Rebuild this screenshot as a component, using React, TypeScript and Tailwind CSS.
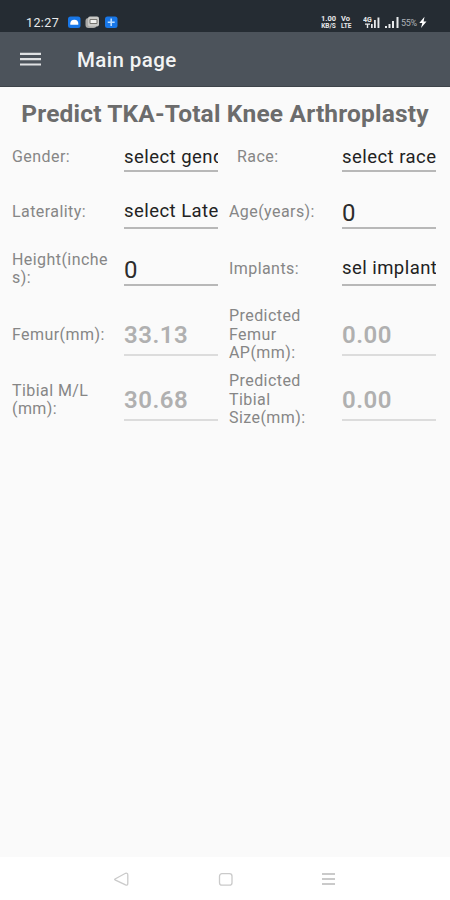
import React from "react";

type Field = {
  label: string;
  value: string;
  labelClass?: string;
  valueClass: string;
};

const selectText = "text-[18.5px] tracking-[0.45px] pt-[3px] text-[#222]";
const numberText = "text-[24px] pt-1 text-[#2c2c2c]";
const resultText = "text-[24px] font-semibold tracking-[0.5px] pt-[3px] text-[#b0b0b0]";

const rows: { height: string; field: string; items: Field[] }[] = [
  {
    height: "h-[30px]",
    field: "h-[30px] border-[#b8b8b8]",
    items: [
      { label: "Gender:", value: "select gender", valueClass: selectText },
      { label: "Race:", value: "select race", labelClass: "pl-2", valueClass: selectText },
    ],
  },
  {
    height: "h-[57px] mt-[11px]",
    field: "h-[35px] border-[#b8b8b8]",
    items: [
      { label: "Laterality:", value: "select Laterality", valueClass: selectText },
      { label: "Age(years):", value: "0", valueClass: numberText },
    ],
  },
  {
    height: "h-[57px]",
    field: "h-[35px] border-[#b8b8b8]",
    items: [
      { label: "Height(inches):", value: "0", valueClass: numberText },
      { label: "Implants:", value: "sel implant", valueClass: selectText },
    ],
  },
  {
    height: "h-[65px] mt-[5px]",
    field: "h-[42px] border-[#dcdcdc]",
    items: [
      { label: "Femur(mm):", value: "33.13", valueClass: resultText },
      { label: "Predicted Femur AP(mm):", value: "0.00", valueClass: resultText },
    ],
  },
  {
    height: "h-[65px]",
    field: "h-[42px] border-[#dcdcdc]",
    items: [
      { label: "Tibial M/L (mm):", value: "30.68", valueClass: resultText },
      { label: "Predicted Tibial Size(mm):", value: "0.00", valueClass: resultText },
    ],
  },
];

function StatusBar() {
  return (
    <div className="flex h-8 items-end bg-[#252c33] pb-[3px] pl-[26px] pr-[23px] text-[#e8eaec]">
      <span className="w-[42px] text-[12.5px] leading-[13px] tracking-[0.4px]">12:27</span>
      <svg width="51" height="14" viewBox="0 0 51 14">
        <rect x="0" y="1.5" width="12.5" height="11.5" rx="2.5" fill="#1877e8" />
        <path d="M2.3 9.7V8.5a4 3.8 0 0 1 8 0v1.2z" fill="#fff" />
        <rect x="17.5" y="3" width="11" height="10" rx="3" fill="#a9a9a7" />
        <rect x="20" y="1.5" width="11" height="10" rx="2" fill="#c9c9c6" />
        <path d="M22 4.5h7v4h-7z" fill="#f2f2f0" stroke="#76746f" strokeWidth="1" />
        <rect x="37" y="1.5" width="12.5" height="11.5" rx="2.5" fill="#1877e8" />
        <path d="M43.2 3.5v7.5M39.7 7.2h7" stroke="#b9dcff" strokeWidth="1.6" />
      </svg>
      <div className="ml-auto flex items-end">
        <div className="mr-[4px] w-[17px] text-center text-[7.5px] font-bold leading-[6.5px]">
          <div>1.00</div>
          <div className="text-[6.5px]">KB/S</div>
        </div>
        <div className="mr-[7px] w-[15px] text-[7.5px] font-bold leading-[6.5px]">
          <div>Vo</div>
          <div className="text-[6.5px]">LTE</div>
        </div>
        <svg width="37" height="13" viewBox="0 0 37 13" fill="#e8eaec">
          <text x="0" y="6" fontSize="7" fontWeight="700">4G</text>
          <path d="M2 7.5h5v1.3H5.2V12H3.8V8.8H2zM8 8h1.7v4H8zM11 4h1.8v8H11zM14.5 1.5h1.9V12h-1.9z" />
          <path d="M22 10h2v2h-2zM25.5 8h2v4h-2zM29 5h2v7h-2zM33.5 1h2v11h-2z" />
        </svg>
        <span className="ml-px mr-px w-[17px] text-[9px] leading-[12px] tracking-[-0.3px] text-[#aeb3b8]">55%</span>
        <svg width="8" height="13" viewBox="0 0 8 13">
          <path d="M5.5 0.8L0.3 7h3L2 12l5.5-6.5H4.6z" fill="#fff" />
        </svg>
      </div>
    </div>
  );
}

function Header() {
  return (
    <header className="flex h-[55px] items-center border-b border-[#3e444a] bg-[#4c535b] pl-5 text-[#f2f3f4]">
      <svg width="21" height="14" viewBox="0 0 21 14" fill="#dfe1e3">
        <path d="M0 0.8h21v2.2H0zM0 6.1h21v2.2H0zM0 11.4h21v2.2H0z" />
      </svg>
      <h1 className="ml-9 pt-[3px] text-[20.5px] font-medium tracking-[0.42px]">Main page</h1>
    </header>
  );
}

function NavBar() {
  return (
    <nav className="h-[43px] bg-white pl-[113px] pt-[15px]">
      <svg width="224" height="16" viewBox="0 0 224 16" fill="none" stroke="#cacaca" strokeWidth="1.3">
        <path d="M2 7L12.5 1.3Q14.8 0.8 14.8 3V11.5Q14.8 13.8 12.5 12.8L2 7.8Q1.3 7.4 2 7z" />
        <rect x="106.5" y="1.7" width="12.5" height="11.5" rx="2.5" />
        <path d="M209 2h13M209 7h13M209 12h13" strokeWidth="1.8" />
      </svg>
    </nav>
  );
}

export default function App() {
  return (
    <div className="flex h-[900px] w-[450px] flex-col overflow-hidden bg-[#fafafa] font-[Roboto,'Liberation_Sans',sans-serif]">
      <StatusBar />
      <Header />
      <main className="flex-1">
        <h2 className="flex h-[55px] items-center justify-center whitespace-nowrap text-[24.5px] font-bold tracking-[0.18px] text-[#6c6c6c]">
          Predict TKA-Total Knee Arthroplasty
        </h2>
        {rows.map((row, i) => (
          <div
            key={i}
            className={`grid grid-cols-[112px_105px_113px_94px] items-center pl-3 ${row.height}`}
          >
            {row.items.map((item) => (
              <React.Fragment key={item.label}>
                <div
                  className={`mr-[14px] break-words pt-px text-[16px] leading-[18.5px] tracking-[0.43px] text-[#868686] ${item.labelClass ?? ""}`}
                >
                  {item.label}
                </div>
                <div
                  className={`flex w-[94px] items-center overflow-hidden whitespace-nowrap border-b-2 ${row.field} ${item.valueClass}`}
                >
                  {item.value}
                </div>
              </React.Fragment>
            ))}
          </div>
        ))}
      </main>
      <NavBar />
    </div>
  );
}
